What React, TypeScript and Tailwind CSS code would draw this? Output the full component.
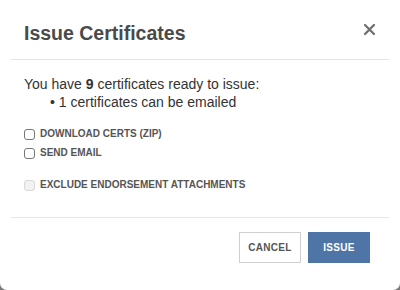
export default function App() {
  return (
    <div className="h-[290px] w-[400px] bg-[#7a7a7a]" style={{ fontFamily: '"Liberation Sans", Arial, sans-serif' }}>
      <div className="flex h-[290px] w-[400px] flex-col rounded-b-[7px] bg-white">
        {/* Header */}
        <div className="mx-[11px] flex h-[60px] items-start justify-between border-b border-[#e5e5e5] pl-[13px] pr-[13px] pt-[21px]">
          <h2 className="text-[19.5px] font-bold leading-[24px] text-[#4a4a4a]">Issue Certificates</h2>
          <svg width="13" height="13" viewBox="0 0 13 13" className="mt-[2px]">
            <path d="M2 2 L11 11 M11 2 L2 11" stroke="#707070" strokeWidth="2.3" strokeLinecap="round" />
          </svg>
        </div>

        {/* Body */}
        <div className="mx-[11px] flex h-[158px] flex-col border-b border-[#e5e5e5] px-[13px] pt-[15px]">
          <p className="text-[14px] leading-[18px] text-[#333]">
            You have <span className="font-bold">9</span> certificates ready to issue:
          </p>
          <ul className="pl-[26px] text-[14px] leading-[18px] text-[#333]">
            <li>• 1 certificates can be emailed</li>
          </ul>

          <div className="mt-[17px] flex flex-col gap-[7px]">
            <label className="flex items-center gap-[5px] text-[10px] font-bold leading-[12px] text-[#555]">
              <span className="h-[11px] w-[11px] rounded-[3px] border border-[#777] bg-white" />
              DOWNLOAD CERTS (ZIP)
            </label>
            <label className="flex items-center gap-[5px] text-[10px] font-bold leading-[12px] text-[#555]">
              <span className="h-[11px] w-[11px] rounded-[3px] border border-[#777] bg-white" />
              SEND EMAIL
            </label>
          </div>
          <label className="mt-[20px] flex items-center gap-[5px] text-[10px] font-bold leading-[12px] text-[#555]">
            <span className="h-[11px] w-[11px] rounded-[3px] border border-[#d8d8d8] bg-[#f2f2f2]" />
            EXCLUDE ENDORSEMENT ATTACHMENTS
          </label>
        </div>

        {/* Footer */}
        <div className="flex justify-end gap-[7px] pr-[30px] pt-[14px]">
          <button className="h-[31px] w-[62px] border border-[#cfcfcf] bg-white text-[10px] font-bold tracking-[0.3px] text-[#555]">
            CANCEL
          </button>
          <button className="h-[31px] w-[62px] bg-[#4f75a7] text-[10px] font-bold tracking-[0.3px] text-white">
            ISSUE
          </button>
        </div>
      </div>
    </div>
  );
}
